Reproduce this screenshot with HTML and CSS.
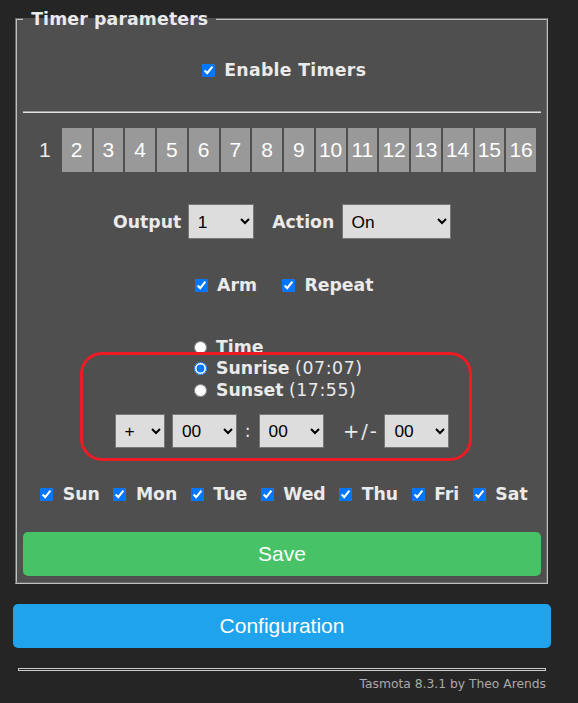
FILE: index.html
```html
<!DOCTYPE html>
<html lang="en">
<head>
<meta charset="utf-8">
<title>Timer parameters</title>
<link rel="stylesheet" href="styles.css">
</head>
<body>
<div class="page">
  <fieldset class="frame">
    <legend class="legend">&nbsp;Timer parameters&nbsp;</legend>
    <div class="row enable">
      <label class="chk"><input type="checkbox" checked><span class="b">Enable Timers</span></label>
    </div>
    <hr class="sep">
    <div class="tabs">
      <button class="tab active">1</button>
      <button class="tab">2</button>
      <button class="tab">3</button>
      <button class="tab">4</button>
      <button class="tab">5</button>
      <button class="tab">6</button>
      <button class="tab">7</button>
      <button class="tab">8</button>
      <button class="tab">9</button>
      <button class="tab">10</button>
      <button class="tab">11</button>
      <button class="tab">12</button>
      <button class="tab">13</button>
      <button class="tab">14</button>
      <button class="tab">15</button>
      <button class="tab">16</button>
    </div>
    <div class="row outrow">
      <span class="b">Output</span>
      <select class="sel s-out"><option>1</option></select>
      <span class="b lbl2">Action</span>
      <select class="sel s-act"><option>On</option></select>
    </div>
    <div class="row armrow">
      <label class="chk"><input type="checkbox" checked><span class="b">Arm</span></label>
      <label class="chk"><input type="checkbox" checked><span class="b">Repeat</span></label>
    </div>
    <div class="radios">
      <label class="rad"><input type="radio" name="m"><span class="b">Time</span></label>
      <label class="rad"><input type="radio" name="m" checked><span><span class="b">Sunrise</span> <span class="tm">(07:07)</span></span></label>
      <label class="rad"><input type="radio" name="m"><span><span class="b">Sunset</span> <span class="tm">(17:55)</span></span></label>
    </div>
    <div class="row timerow">
      <select class="sel s-sign"><option>+</option></select>
      <select class="sel s-num s-hour"><option>00</option></select>
      <span class="colon">:</span>
      <select class="sel s-num"><option>00</option></select>
      <span class="pm">+/-</span>
      <select class="sel s-num"><option>00</option></select>
    </div>
    <div class="row days">
      <label class="chk"><input type="checkbox" checked><span class="b">Sun</span></label>
      <label class="chk"><input type="checkbox" checked><span class="b">Mon</span></label>
      <label class="chk"><input type="checkbox" checked><span class="b">Tue</span></label>
      <label class="chk"><input type="checkbox" checked><span class="b">Wed</span></label>
      <label class="chk"><input type="checkbox" checked><span class="b">Thu</span></label>
      <label class="chk"><input type="checkbox" checked><span class="b">Fri</span></label>
      <label class="chk"><input type="checkbox" checked><span class="b">Sat</span></label>
    </div>
    <button class="btn save">Save</button>
  </fieldset>
  <button class="btn config">Configuration</button>
  <hr class="foot-hr">
  <div class="footer">Tasmota 8.3.1 by Theo Arends</div>
</div>
<div class="annot"></div>
</body>
</html>
```

FILE: styles.css
```css
html, body {
  margin: 0;
  padding: 0;
  background: #252525;
}
body {
  position: relative;
  width: 578px;
  height: 703px;
  overflow: hidden;
  font-family: "DejaVu Sans", Verdana, sans-serif;
  font-size: 17.3px;
  color: #eaeaea;
}
.page {
  width: 538px;
  margin-left: 13px;
  padding-top: 8px;
}
.frame {
  margin: 0 3px 0 2px;
  padding: 0 5px 6px 6px;
  background: #4f4f4f;
  border: 2px groove #c0c0c0;
  min-width: 0;
}
.legend {
  padding: 0 2px;
  margin: 0;
  font-weight: bold;
  line-height: 22px;
  letter-spacing: 0.15px;
  color: #eaeaea;
}
.b { font-weight: bold; }
.row {
  display: flex;
  align-items: center;
  justify-content: center;
}
.chk, .rad {
  display: flex;
  align-items: center;
  line-height: 20px;
}
.chk input {
  width: 13px;
  height: 13px;
  margin: 0 9.5px 0 4px;
}
.enable {
  margin-top: 30px;
  height: 20px;
}
.enable .b { letter-spacing: 0.3px; }
.sep {
  margin: 31px 0 0;
  height: 0;
  border: 0;
  border-top: 1px solid #9a9a9a;
  border-bottom: 1px solid #e0e0e0;
}
.tabs {
  display: flex;
  margin: 14px 4px 0 6px;
}
.tab {
  flex: 1 1 0;
  min-width: 0;
  height: 46px;
  padding: 0;
  margin: 0;
  border: 1px solid #4f4f4f;
  border-radius: 0;
  background: #999999;
  color: #ffffff;
  font-family: "Liberation Sans", Arial, sans-serif;
  font-size: 21px;
}
.tab.active {
  background: #4f4f4f;
  color: #eaeaea;
}
.outrow {
  margin-top: 31px;
  height: 35px;
}
.sel {
  height: 35px;
  margin: 0;
  padding: 0 5px;
  border: 1px solid #767676;
  border-radius: 0;
  background-color: #dddddd;
  color: #000000;
  font-family: "Liberation Sans", Arial, sans-serif;
  font-size: 17.3px;
}
.s-out { width: 66px; margin-left: 6.6px; }
.lbl2 { margin-left: 18.4px; }
.s-act { width: 109.4px; margin-left: 7.3px; }
.armrow {
  margin-top: 36px;
  height: 20px;
  gap: 21px;
}
.radios {
  margin-top: 41.5px;
  display: flex;
  flex-direction: column;
  align-items: flex-start;
  width: max-content;
  margin-left: auto;
  margin-right: auto;
  padding-right: 12px;
}
.rad {
  line-height: 21.5px;
  height: 21.5px;
}
.rad input {
  width: 13px;
  height: 13px;
  margin: 0 8.7px 0 5px;
}
.tm { letter-spacing: 0.6px; }
.timerow {
  margin-top: 13px;
  height: 34px;
}
.timerow .sel { height: 34px; }
.s-sign { width: 50px; }
.s-num { width: 65px; }
.s-hour { margin-left: 7.4px; }
.colon {
  width: 21.6px;
  text-align: center;
}
.pm {
  margin: 0 5.6px 0 19.4px;
  font-size: 19.5px;
  letter-spacing: 2px;
}
.days {
  margin-top: 36px;
  height: 20px;
  gap: 9.5px;
}
.btn {
  display: block;
  width: 100%;
  height: 44px;
  margin: 0;
  padding: 0;
  border: 0;
  border-radius: 5px;
  color: #ffffff;
  font-family: "Liberation Sans", Arial, sans-serif;
  font-size: 21px;
}
.save {
  margin-top: 28px;
  background: #47c266;
}
.config {
  margin-top: 20px;
  background: #1fa3ec;
}
.foot-hr {
  margin: 20px 5px 0;
  height: 1px;
  border: 1px solid #cccccc;
  background: #252525;
  padding: 0;
}
.footer {
  margin: 6px 5px 0;
  text-align: right;
  font-size: 12.3px;
  line-height: 15px;
  color: #aaaaaa;
}
.annot {
  position: absolute;
  left: 80px;
  top: 352px;
  width: 392px;
  height: 109px;
  box-sizing: border-box;
  border: 3.5px solid #ed1c24;
  border-radius: 22px;
  pointer-events: none;
}
```
